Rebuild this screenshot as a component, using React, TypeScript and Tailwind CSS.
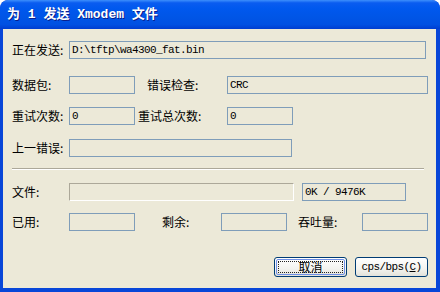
import React from "react";

const cjk = '"Noto Sans CJK SC", "Noto Sans", sans-serif';
const mono = '"Liberation Mono", "Noto Sans CJK SC", monospace';

function Label({ children, w }: { children: React.ReactNode; w: string }) {
  return (
    <div className={`${w} shrink-0 text-[12px] leading-[18px] text-black`} style={{ fontFamily: cjk }}>
      {children}
    </div>
  );
}

function Field({ w, text, sunken }: { w: string; text?: string; sunken?: boolean }) {
  return (
    <div
      className={`${w} h-[18px] shrink-0 ${
        sunken
          ? "border border-t-[#aca899] border-l-[#aca899] border-r-white border-b-white"
          : "border border-[#7f9db9]"
      } bg-[#ece9d8] pl-[2px] text-[11px] tracking-[-0.6px] leading-[16px] text-black`}
      style={{ fontFamily: mono }}
    >
      {text}
    </div>
  );
}

export default function App() {
  return (
    <div className="w-[440px] h-[292px] bg-white">
      <div className="w-[440px] h-[292px] rounded-t-[8px] bg-[#0846d8] flex flex-col overflow-hidden">
        <div className="h-[29px] shrink-0 rounded-t-[8px] bg-[linear-gradient(to_bottom,#3d8ffc_0%,#0a5cf0_10%,#0058ee_30%,#0055e6_60%,#0050e2_85%,#003dd0_100%)] flex items-center pl-[7px]">
          <span
            className="text-white font-bold text-[13px] leading-none [text-shadow:1px_1px_#0a1e8c]"
            style={{ fontFamily: mono }}
          >
            为 1 发送 Xmodem 文件
          </span>
        </div>
        <div className="flex-1 ml-[3px] mr-[4px] mb-[4px] bg-[#ece9d8] flex flex-col pl-[9px]">
          <div className="mt-[12px] flex items-center">
            <Label w="w-[57px]">正在发送:</Label>
            <Field w="w-[357px]" text="D:\tftp\wa4300_fat.bin" />
          </div>
          <div className="mt-[17px] flex items-center">
            <Label w="w-[57px]">数据包:</Label>
            <Field w="w-[66px]" />
            <Label w="w-[80px] ml-[12px]">错误检查:</Label>
            <Field w="w-[201px]" text="CRC" />
          </div>
          <div className="mt-[13px] flex items-center">
            <Label w="w-[57px]">重试次数:</Label>
            <Field w="w-[66px]" text="0" />
            <Label w="w-[89px] ml-[3px]">重试总次数:</Label>
            <Field w="w-[66px]" text="0" />
          </div>
          <div className="mt-[14px] flex items-center">
            <Label w="w-[57px]">上一错误:</Label>
            <Field w="w-[223px]" />
          </div>
          <div className="mt-[11px] mr-[12px] h-[2px] border-t border-t-[#aca899] border-b border-b-white" />
          <div className="mt-[13px] flex items-center">
            <Label w="w-[57px]">文件:</Label>
            <Field w="w-[225px]" sunken />
            <div className="w-[8px]" />
            <Field w="w-[104px]" text="0K / 9476K" />
          </div>
          <div className="mt-[12px] flex items-center">
            <Label w="w-[57px]">已用:</Label>
            <Field w="w-[66px]" />
            <Label w="w-[59px] ml-[27px]">剩余:</Label>
            <Field w="w-[66px]" />
            <Label w="w-[64px] ml-[11px]">吞吐量:</Label>
            <Field w="w-[66px]" />
          </div>
          <div className="mt-[26px] flex justify-end pr-[8px] gap-[8px]">
            <button
              className="w-[73px] h-[20px] rounded-[3px] border border-[#003c74] bg-[linear-gradient(to_bottom,#ffffff_0%,#f3f3ef_60%,#e3e2da_100%)] p-[1px] text-[12px] leading-none text-black"
              style={{ fontFamily: cjk }}
            >
              <div className="w-full h-full rounded-[2px] border border-[#6f8fe6] p-[1px]">
                <div className="w-full h-full border border-dotted border-[#222] flex items-center justify-center leading-[12px]">取消</div>
              </div>
            </button>
            <button
              className="w-[73px] h-[20px] rounded-[3px] border border-[#003c74] bg-[linear-gradient(to_bottom,#ffffff_0%,#f3f3ef_60%,#e3e2da_100%)] text-[11px] tracking-[-0.6px] leading-none text-black flex items-center justify-center"
              style={{ fontFamily: mono }}
            >
              cps/bps(<span className="underline">C</span>)
            </button>
          </div>
        </div>
      </div>
    </div>
  );
}
